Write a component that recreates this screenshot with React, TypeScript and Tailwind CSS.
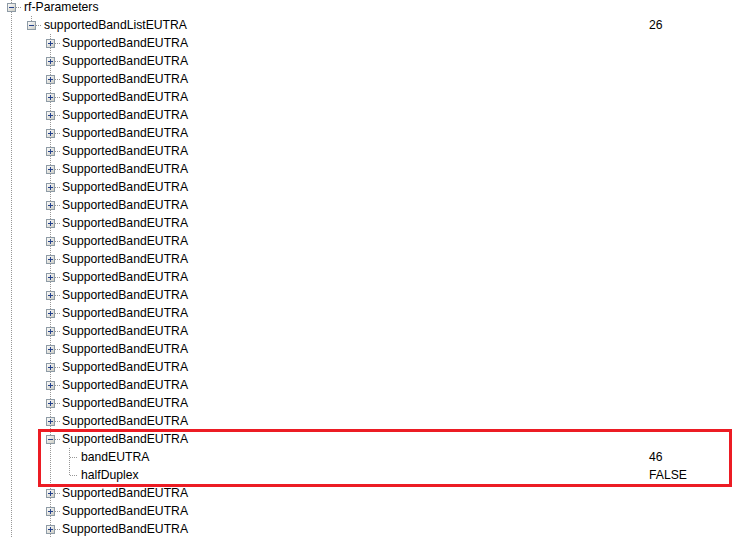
type Row = {
  level: number;
  label: string;
  value?: string;
  box?: "plus" | "minus";
  cols: ("full" | "top" | "none")[];
};

const centers = [11, 31, 50, 69];
const textX = [24, 44, 62, 81];

const band = (n: number): Row[] =>
  Array.from({ length: n }, () => ({
    level: 2,
    label: "SupportedBandEUTRA",
    box: "plus",
    cols: ["full", "none", "full"],
  }));

const rows: Row[] = [
  { level: 0, label: "rf-Parameters", box: "minus", cols: ["full"] },
  { level: 1, label: "supportedBandListEUTRA", value: "26", box: "minus", cols: ["full", "top"] },
  ...band(22),
  { level: 2, label: "SupportedBandEUTRA", box: "minus", cols: ["full", "none", "full"] },
  { level: 3, label: "bandEUTRA", value: "46", cols: ["full", "none", "full", "full"] },
  { level: 3, label: "halfDuplex", value: "FALSE", cols: ["full", "none", "full", "top"] },
  ...band(3),
];

function TreeLines({ row }: { row: Row }) {
  const w = textX[row.level];
  const cx = centers[row.level];
  const dot = "#989898";
  return (
    <svg width={w} height={18} className="shrink-0 block">
      {row.cols.map((c, i) =>
        c === "none" ? null : (
          <line
            key={i}
            x1={centers[i] + 0.5}
            x2={centers[i] + 0.5}
            y1={0}
            y2={c === "full" ? 18 : 10}
            stroke={dot}
            strokeDasharray="1 1"
          />
        )
      )}
      <line
        x1={cx + 1}
        x2={row.box ? cx + 10 : w - 3}
        y1={9.5}
        y2={9.5}
        stroke={dot}
        strokeDasharray="1 1"
      />
      {row.box && (
        <g>
          <defs>
            <linearGradient id="bx" x1="0" y1="0" x2="1" y2="1">
              <stop offset="0" stopColor="#ffffff" />
              <stop offset="1" stopColor="#c9c9c0" />
            </linearGradient>
          </defs>
          <rect x={cx - 3.5} y={5.5} width={8} height={8} fill="url(#bx)" stroke="#8e9ba6" />
          <line x1={cx - 2} x2={cx + 3} y1={9.5} y2={9.5} stroke="#23418c" />
          {row.box === "plus" && (
            <line x1={cx + 0.5} x2={cx + 0.5} y1={7} y2={12} stroke="#23418c" />
          )}
        </g>
      )}
    </svg>
  );
}

export default function App() {
  return (
    <div className="relative w-[756px] h-[538px] overflow-hidden bg-white text-black font-['Liberation_Sans',Arial,sans-serif] text-[12.2px]">
      <div className="-mt-[2px] flex flex-col">
        {rows.map((row, i) => (
          <div key={i} className="flex h-[18px] leading-[18px]">
            <div className="flex w-[649px] shrink-0">
              <TreeLines row={row} />
              <span className="whitespace-nowrap">{row.label}</span>
            </div>
            <span>{row.value}</span>
          </div>
        ))}
      </div>
      <div className="absolute left-[38px] top-[429px] w-[694px] h-[58px] border-[3px] border-[#ec1c24]" />
    </div>
  );
}
